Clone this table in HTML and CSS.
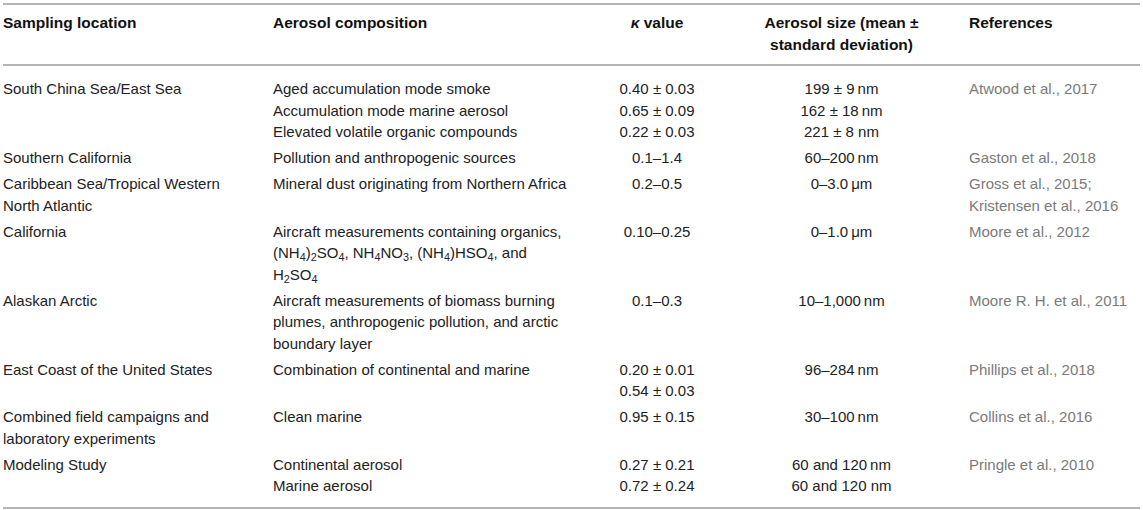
FILE: index.html
```html
<!DOCTYPE html>
<html lang="en">
<head>
<meta charset="utf-8">
<title>Hygroscopicity parameter table</title>
<link rel="stylesheet" href="styles.css">
</head>
<body>
<div class="page">
<table class="data">
  <colgroup>
    <col class="c-loc">
    <col class="c-comp">
    <col class="c-kappa">
    <col class="c-size">
    <col class="c-ref">
  </colgroup>
  <thead>
    <tr>
      <th class="loc">Sampling location</th>
      <th>Aerosol composition</th>
      <th class="num"><i>κ</i> value</th>
      <th class="num">Aerosol size (mean ±<br>standard deviation)</th>
      <th>References</th>
    </tr>
  </thead>
  <tbody>
    <tr>
      <td class="loc">South China Sea/East Sea</td>
      <td>Aged accumulation mode smoke<br>Accumulation mode marine aerosol<br>Elevated volatile organic compounds</td>
      <td class="num">0.40 ± 0.03<br>0.65 ± 0.09<br>0.22 ± 0.03</td>
      <td class="num">199 ± 9&thinsp;nm<br>162 ± 18&thinsp;nm<br>221 ± 8 nm</td>
      <td class="ref">Atwood et al., 2017</td>
    </tr>
    <tr>
      <td class="loc">Southern California</td>
      <td>Pollution and anthropogenic sources</td>
      <td class="num">0.1–1.4</td>
      <td class="num">60–200&thinsp;nm</td>
      <td class="ref">Gaston et al., 2018</td>
    </tr>
    <tr>
      <td class="loc">Caribbean Sea/Tropical Western<br>North Atlantic</td>
      <td>Mineral dust originating from Northern Africa</td>
      <td class="num">0.2–0.5</td>
      <td class="num">0–3.0&thinsp;μm</td>
      <td class="ref">Gross et al., 2015;<br>Kristensen et al., 2016</td>
    </tr>
    <tr>
      <td class="loc">California</td>
      <td>Aircraft measurements containing organics,<br>(NH<sub>4</sub>)<sub>2</sub>SO<sub>4</sub>, NH<sub>4</sub>NO<sub>3</sub>, (NH<sub>4</sub>)HSO<sub>4</sub>, and<br>H<sub>2</sub>SO<sub>4</sub></td>
      <td class="num">0.10–0.25</td>
      <td class="num">0–1.0&thinsp;μm</td>
      <td class="ref">Moore et al., 2012</td>
    </tr>
    <tr>
      <td class="loc">Alaskan Arctic</td>
      <td>Aircraft measurements of biomass burning<br>plumes, anthropogenic pollution, and arctic<br>boundary layer</td>
      <td class="num">0.1–0.3</td>
      <td class="num">10–1,000&thinsp;nm</td>
      <td class="ref">Moore R. H. et al., 2011</td>
    </tr>
    <tr>
      <td class="loc">East Coast of the United States</td>
      <td>Combination of continental and marine</td>
      <td class="num">0.20 ± 0.01<br>0.54 ± 0.03</td>
      <td class="num">96–284&thinsp;nm</td>
      <td class="ref">Phillips et al., 2018</td>
    </tr>
    <tr>
      <td class="loc">Combined field campaigns and<br>laboratory experiments</td>
      <td>Clean marine</td>
      <td class="num">0.95 ± 0.15</td>
      <td class="num">30–100&thinsp;nm</td>
      <td class="ref">Collins et al., 2016</td>
    </tr>
    <tr>
      <td class="loc">Modeling Study</td>
      <td>Continental aerosol<br>Marine aerosol</td>
      <td class="num">0.27 ± 0.21<br>0.72 ± 0.24</td>
      <td class="num">60 and 120&thinsp;nm<br>60 and 120 nm</td>
      <td class="ref">Pringle et al., 2010</td>
    </tr>
  </tbody>
</table>
</div>
</body>
</html>
```

FILE: styles.css
```css
html, body {
  margin: 0;
  padding: 0;
  background: #ffffff;
}

.page {
  padding: 3px 3px 0 3px;
}

.data {
  width: 1137px;
  border-collapse: collapse;
  table-layout: fixed;
  font-family: "Liberation Sans", Arial, Helvetica, sans-serif;
  font-size: 15px;
  line-height: 21.5px;
  color: #222222;
}

.c-loc { width: 270px; }
.c-comp { width: 327px; }
.c-kappa { width: 114px; }
.c-size { width: 255px; }
.c-ref { width: 171px; }

.data th {
  border-top: 2px solid #b4b4b4;
  border-bottom: 2px solid #b4b4b4;
  padding: 7px 0 9px 0;
  text-align: left;
  vertical-align: top;
  font-size: 15.5px;
  font-weight: bold;
  color: #111111;
}

.data td {
  padding: 2px 0 2.5px 0;
  vertical-align: top;
  text-align: left;
}

.data .loc {
  padding-right: 40px;
}

.data .num {
  text-align: center;
}

.data .ref {
  color: #7a7a7a;
}

.data tbody tr:first-child td {
  padding-top: 12px;
}

.data tbody tr:last-child td {
  padding-bottom: 10px;
  border-bottom: 2px solid #b4b4b4;
}

.data sub {
  font-size: 0.72em;
  line-height: 0;
  vertical-align: -0.3em;
}
```
